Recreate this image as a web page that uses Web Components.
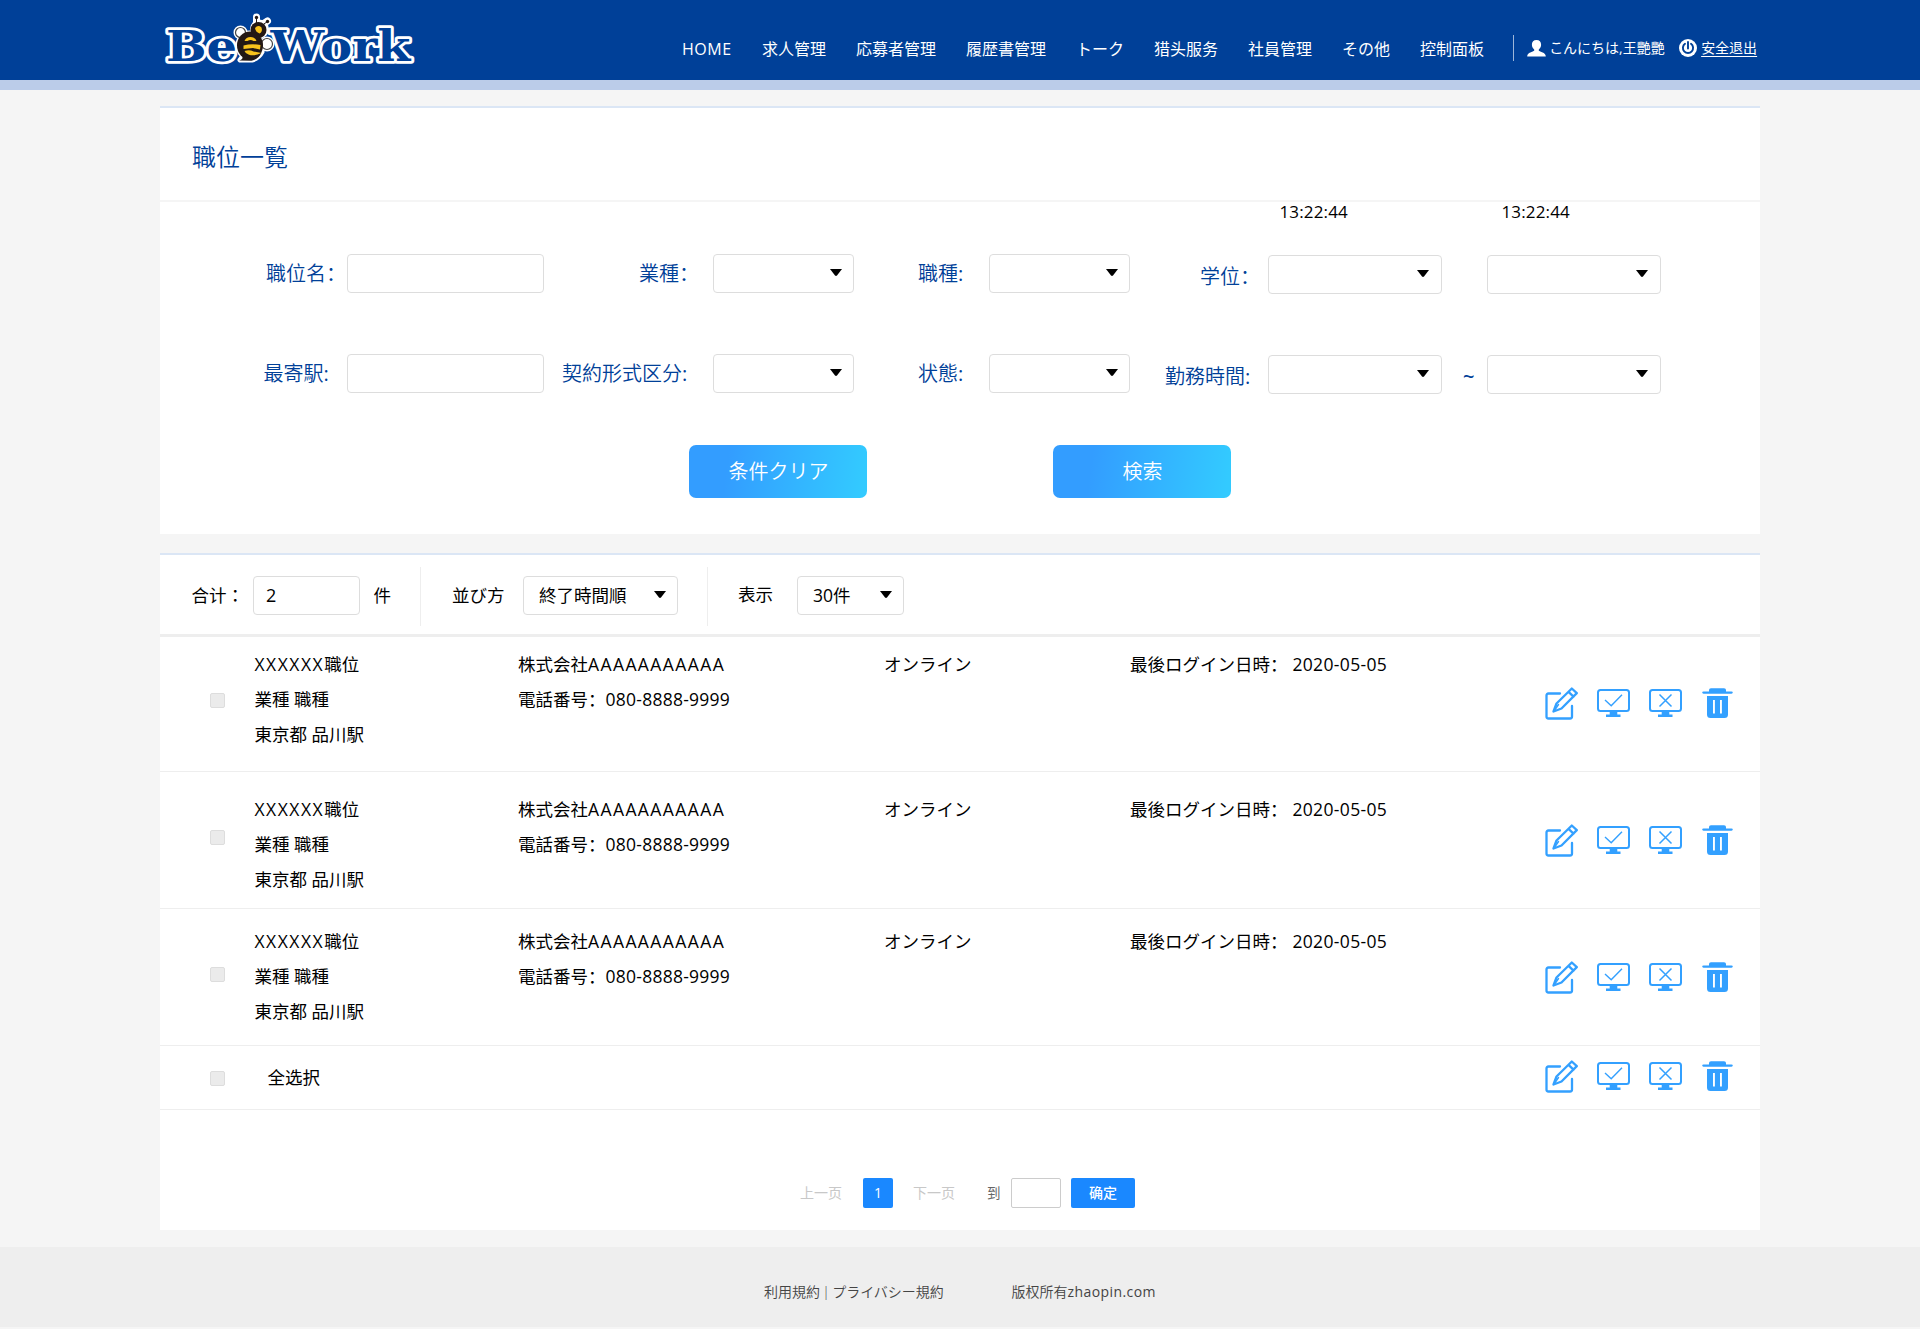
<!DOCTYPE html>
<html lang="zh-CN">
<head>
<meta charset="utf-8">
<title>職位一覧 - BeeWork</title>
<style>
html,body{margin:0;padding:0}
body{background:#f5f5f5;font-family:"Open Sans","Noto Sans CJK SC","Noto Sans CJK JP",sans-serif;font-size:17.5px;font-weight:400;color:#000;width:1920px;height:1329px;overflow:hidden}
</style>
</head>
<body>
<bee-app></bee-app>
<script>
const define = (name, css, html) => customElements.define(name, class extends HTMLElement {
  constructor() {
    super();
    this.attachShadow({ mode: 'open' }).innerHTML =
      `<style>:host{display:block;box-sizing:border-box}*{box-sizing:border-box}${css}</style>` + html;
  }
});

define('bee-logo', ':host{width:260px;height:80px}svg{display:block}text{font-family:"DejaVu Serif",serif;font-weight:700;fill:#004098;stroke:#fff;stroke-width:5.4px;stroke-linejoin:round;paint-order:stroke}', `
<svg width="260" height="80" viewBox="160 0 260 80">
  <text x="166" y="60.500" font-size="43" textLength="71" lengthAdjust="spacingAndGlyphs">Be</text>
  <text x="270.500" y="60.500" font-size="43" textLength="140" lengthAdjust="spacingAndGlyphs">Work</text>
  <g stroke="#fff" stroke-width="5" fill="#fff" stroke-linejoin="round">
    <circle cx="240.500" cy="32.500" r="5.500" stroke-width="3"/>
    <circle cx="267" cy="44" r="6" stroke-width="3"/>
    <circle cx="259.500" cy="29" r="7"/>
    <ellipse cx="249.500" cy="45.500" rx="11.500" ry="12.500"/>
    <path d="M240 60h12q7-2 10-8l-14-3-5 7z"/>
    <path d="M256.500 24v-7M263 24l4.500-3" stroke-width="7" stroke-linecap="round"/>
  </g>
  <circle cx="240.500" cy="32.500" r="5" fill="#fff" stroke="#444" stroke-width="1.200"/>
  <circle cx="267" cy="44" r="5.500" fill="#fff" stroke="#444" stroke-width="1.200"/>
  <g fill="#231815">
    <circle cx="258.500" cy="30" r="8"/>
    <ellipse cx="250" cy="45.500" rx="13" ry="14"/>
    <path d="M239 60.500q4-1 3.500-4l8-3 11-1q-3 7-10 8.200z"/>
    <circle cx="256.500" cy="17.500" r="1.700"/><circle cx="267.500" cy="21.500" r="1.700"/>
    <path d="M256.500 17v7M267.500 21.500l-5 3.500" stroke="#231815" stroke-width="1"/>
  </g>
  <g fill="#f8c21c">
    <path d="M255 28q3-3.500 6.500-.5q1.500 4-2 6-4-1.500-4.500-5.500z"/>
    <path d="M244.500 41q1.500-4 6-4t6 4h-3q-3-2-6 0z"/>
    <path d="M243.500 45.500q8-2 17-.5l-.5 4.500-7-1.500-9.500 1z"/>
    <path d="M244.500 51q5-1.500 9 .5l8 1.500q-7 3.500-12.500 1.800-3.500-.8-4.500-3.800z"/>
  </g>
</svg>`);

define('nav-item', ':host{font-size:16px;line-height:24px;white-space:nowrap}', '<slot></slot>');

define('user-bar', `:host{display:flex;align-items:center;height:26px;color:#fff;font-size:14px;line-height:24px;border-left:1px solid #9db6d9;padding-left:13px;white-space:nowrap}
svg{display:block;flex:none}.name{width:133px;padding-left:3px}.out{padding-left:4px;text-decoration:underline;text-underline-offset:3px}`, `
<svg width="19" height="17" viewBox="0 0 19 17"><path fill="#fff" d="M9.500 0c3 0 4.600 2 4.600 4.700 0 2-1 3.700-2.300 4.700v1.300c1 1 7 1.500 7 5.800H.2c0-4.300 6-4.800 7-5.800V9.400C5.900 8.400 4.900 6.700 4.900 4.700 4.900 2 6.500 0 9.500 0z"/></svg>
<span class="name">こんにちは,王艷艷</span>
<svg width="18" height="18" viewBox="0 0 18 18"><circle cx="9" cy="9" r="9" fill="#fff"/><path d="M6 4.800a5.100 5.100 0 1 0 6 0M9 3v6.500" fill="none" stroke="#004098" stroke-width="1.900" stroke-linecap="round"/></svg>
<span class="out">安全退出</span>`);

define('app-header', `:host{display:flex;height:90px;background:#004098;border-bottom:10px solid #bbcce9;color:#fff;padding-left:160px}
nav{display:flex;gap:30px;padding:37px 0 0 262px}.home{width:50px;letter-spacing:.5px}user-bar{margin:35px 0 0 29px}`, `
<bee-logo></bee-logo>
<nav><nav-item class="home">HOME</nav-item><nav-item>求人管理</nav-item><nav-item>応募者管理</nav-item><nav-item>履歴書管理</nav-item><nav-item>トーク</nav-item><nav-item>猎头服务</nav-item><nav-item>社員管理</nav-item><nav-item>その他</nav-item><nav-item>控制面板</nav-item></nav>
<user-bar></user-bar>`);

define('select-box', `:host{display:flex;align-items:center;justify-content:space-between;height:39px;background:#fff;border:1px solid #ddd;border-radius:4px;line-height:36px;padding:0 var(--arrow-inset,11px) 0 15px;white-space:nowrap}
span{padding-bottom:2px}svg{display:block;margin-top:-2px;flex:none}`, `<span><slot></slot></span><svg width="12" height="7" viewBox="0 0 12 7"><path d="M0 0h12L7 6.500q-1 .9-2 0z"/></svg>`);

define('text-box', ':host{height:39px;background:#fff;border:1px solid #ddd;border-radius:4px;line-height:36px;padding-left:12px;font-size:18px}', '<slot></slot>');

define('field-label', ':host{font-size:20px;line-height:39px;color:#004098;white-space:nowrap}', '<slot></slot>');

define('action-button', ':host{width:178px;height:53px;border-radius:7px;background:linear-gradient(98deg,#339dff 22%,#33caff 97%);color:#fff;font-size:20px;font-weight:350;line-height:54px;text-align:center;padding-left:1px}', '<slot></slot>');

define('search-panel', `:host{background:#fff;border-top:2px solid #dbe6f5;height:428px}
h1{margin:0;height:94px;border-bottom:2px solid #f5f5f5;padding-left:32px;font-weight:350;font-size:24px;line-height:98px;color:#004098}
.times{display:flex;height:20px;line-height:20px;padding-left:1119.500px;font-size:17px;letter-spacing:.15px}.times span{width:222px}
.grid{display:grid;grid-template-columns:87px 197px 169px 141px 135px 141px 138px 174px 45px 174px;grid-template-rows:39px 39px;row-gap:61px;padding:32px 0 0 100px}
field-label{font-weight:350}
.h{font-weight:400}
.low{margin-top:1px;--arrow-inset:12px}.low3{margin-top:3px}.tilde{font-weight:600}
.buttons{display:flex;gap:186px;padding:52px 0 0 529px}`, `
<h1>職位一覧</h1>
<div class="times"><span>13:22:44</span><span>13:22:44</span></div>
<div class="grid">
<field-label style="padding-left:6px">職位名：</field-label><text-box></text-box>
<field-label style="padding-left:95px">業種：</field-label><select-box></select-box>
<field-label style="padding-left:64px">職種<span class="h">:</span></field-label><select-box></select-box>
<field-label class="low3" style="padding-left:70px">学位：</field-label><select-box class="low"></select-box><span></span><select-box class="low"></select-box>
<field-label style="padding-left:3.500px">最寄駅<span class="h">:</span></field-label><text-box></text-box>
<field-label style="padding-left:18px">契約形式区分<span class="h">:</span></field-label><select-box></select-box>
<field-label style="padding-left:64px">状態<span class="h">:</span></field-label><select-box></select-box>
<field-label class="low3" style="padding-left:35px">勤務時間<span class="h">:</span></field-label><select-box class="low"></select-box><field-label class="low3 tilde" style="padding-left:21px">~</field-label><select-box class="low"></select-box>
</div>
<div class="buttons"><action-button>条件クリア</action-button><action-button>検索</action-button></div>`);

define('list-toolbar', `:host{display:flex;height:82px;border-bottom:3px solid #eee;padding:12px 0 0 31.500px;line-height:57px;white-space:nowrap}
text-box,select-box{margin-top:9px}
.sep{width:1px;height:59px;background:#eee}
.colon{font-family:'Noto Sans CJK JP',sans-serif;line-height:0}`, `
<span style="width:61.500px">合计<span lang="ja" class="colon">：</span></span>
<text-box style="width:107px">2</text-box>
<span style="width:60px;padding-left:13.500px">件</span><span class="sep"></span>
<span style="width:102px;padding-left:31px">並び方</span>
<select-box style="width:155px">終了時間順</select-box>
<span style="width:29px"></span><span class="sep"></span>
<span style="width:89px;padding-left:30px;line-height:55px">表示</span>
<select-box style="width:107px">30件</select-box>`);

define('check-box', ':host{width:15px;height:15px;border:1px solid #ddd;border-radius:2px;background:#ebebeb}', '');

define('row-actions', ':host{display:flex;width:190px;height:33px;color:#33a0ff}svg{display:block}.mon{margin-top:2px}.e{margin-right:19px}.m{margin-right:19px}.x{margin-right:20px}', `
<svg class="e" width="33" height="33" viewBox="0 0 33 33" fill="none" stroke="currentColor" stroke-width="2.300" stroke-linejoin="round" stroke-linecap="round"><path d="M15 6.500H3.500q-2 0-2 2v21q0 2 2 2H25q2 0 2-2V19"/><path d="M8.500 24.500l3-8L26.800 1.500l5 4.600L16.500 21.500zM23.500 4.900l5 4.700"/><path d="M9 24l4.500-6.500" stroke-width="1.500"/></svg>
<svg class="m mon" width="33" height="28" viewBox="0 0 33 28" fill="none" stroke="currentColor"><rect x="1" y="1" width="31" height="21" rx="2.500" stroke-width="2"/><path d="M12.700 22h7.600v3.500h3.200V28H9v-2.500h3.700z" fill="currentColor" stroke="none"/><path d="M8 11l6.200 5.800L25 5.700" stroke-width="1.400"/></svg>
<svg class="x mon" width="33" height="28" viewBox="0 0 33 28" fill="none" stroke="currentColor"><rect x="1" y="1" width="31" height="21" rx="2.500" stroke-width="2"/><path d="M12.700 22h7.600v3.500h3.200V28H9v-2.500h3.700z" fill="currentColor" stroke="none"/><path d="M10.500 5.500l12 12M22.500 5.500l-12 12" stroke-width="1.500"/></svg>
<svg width="31" height="33" viewBox="0 0 31 33" fill="currentColor"><path d="M7 4.500V3q0-1.800 2-1.800h13Q24 1.200 24 3v1.500h5.500q1.300 0 1.300 1.100t-1.300 1.100h-28Q.2 6.700.2 5.600T1.500 4.500z"/><path fill-rule="evenodd" d="M5 9h21v18.500q0 3.500-3.500 3.500h-14Q5 31 5 27.500zM11 13v13.500h1.900V13zM18 13v13.500h1.900V13z"/></svg>`);

define('job-row', `:host{display:flex;border-bottom:1px solid #eee;line-height:35px;white-space:nowrap}
check-box{margin:var(--check-top) 29px 0 50px}.c{padding-top:var(--text-top)}
.x{letter-spacing:1.500px}.a{letter-spacing:1.400px}.n{letter-spacing:.25px}.d{letter-spacing:.35px}
row-actions{margin-top:var(--icon-top)}`, `
<check-box></check-box>
<div class="c" style="width:264px;padding-left:.5px"><span class="x">XXXXXX</span>職位<br>業種 職種<br>東京都 品川駅</div>
<div class="c" style="width:366px">株式会社<span class="a">AAAAAAAAAAA</span><br>電話番号：<span class="n">080-8888-9999</span></div>
<div class="c" style="width:246px">オンライン</div>
<div class="c" style="width:415px">最後ログイン日時：<span class="d"> 2020-05-05</span></div>
<row-actions></row-actions>`);

define('select-all-row', `:host{display:flex;height:64px;border-bottom:1px solid #eee;line-height:62px}
check-box{margin:25px 42.500px 0 50px}span{width:1277.500px}row-actions{margin-top:14px}`, `<check-box></check-box><span>全选択</span><row-actions></row-actions>`);

define('pager-bar', `:host{display:flex;height:120px;padding:68px 0 0 640px;font-size:14px;line-height:30px;color:#c8c8c8;white-space:nowrap}
b{font-weight:400;display:block;height:30px;background:#1a88ff;color:#fff;border-radius:2px;text-align:center}
i{display:block;width:50px;height:30px;border:1px solid #ccc;border-radius:2px}`, `
<span style="width:63px">上一页</span><b style="width:30px">1</b>
<span style="width:94px;padding-left:20px">下一页</span><span style="width:24px;color:#666;font-size:13.500px">到</span><i></i>
<b style="width:64px;margin-left:10px;font-weight:500">确定</b>`);

define('list-panel', `:host{background:#fff;border-top:2px solid #dbe6f5;height:677px;margin-top:19px}`, `
<list-toolbar></list-toolbar>
<job-row style="height:135px;--check-top:56px;--text-top:10px;--icon-top:50px"></job-row>
<job-row style="height:137px;--check-top:58px;--text-top:20px;--icon-top:52px"></job-row>
<job-row style="height:137px;--check-top:58px;--text-top:15px;--icon-top:52px"></job-row>
<select-all-row></select-all-row>
<pager-bar></pager-bar>`);

define('app-footer', `:host{display:flex;height:80px;margin-top:17px;background:#eee;padding-left:764px;font-size:14px;font-weight:350;line-height:90px;color:#444;white-space:nowrap}
.l{width:247.500px;word-spacing:-1.350px}.z{font-weight:400;letter-spacing:.42px}`, `<span class="l">利用規約 | プライバシー規約</span><span>版权所有<span class="z">zhaopin.com</span></span>`);

define('bee-app', 'main{width:1600px;margin:16px auto 0}', `<app-header></app-header><main><search-panel></search-panel><list-panel></list-panel></main><app-footer></app-footer>`);
</script>
</body>
</html>
